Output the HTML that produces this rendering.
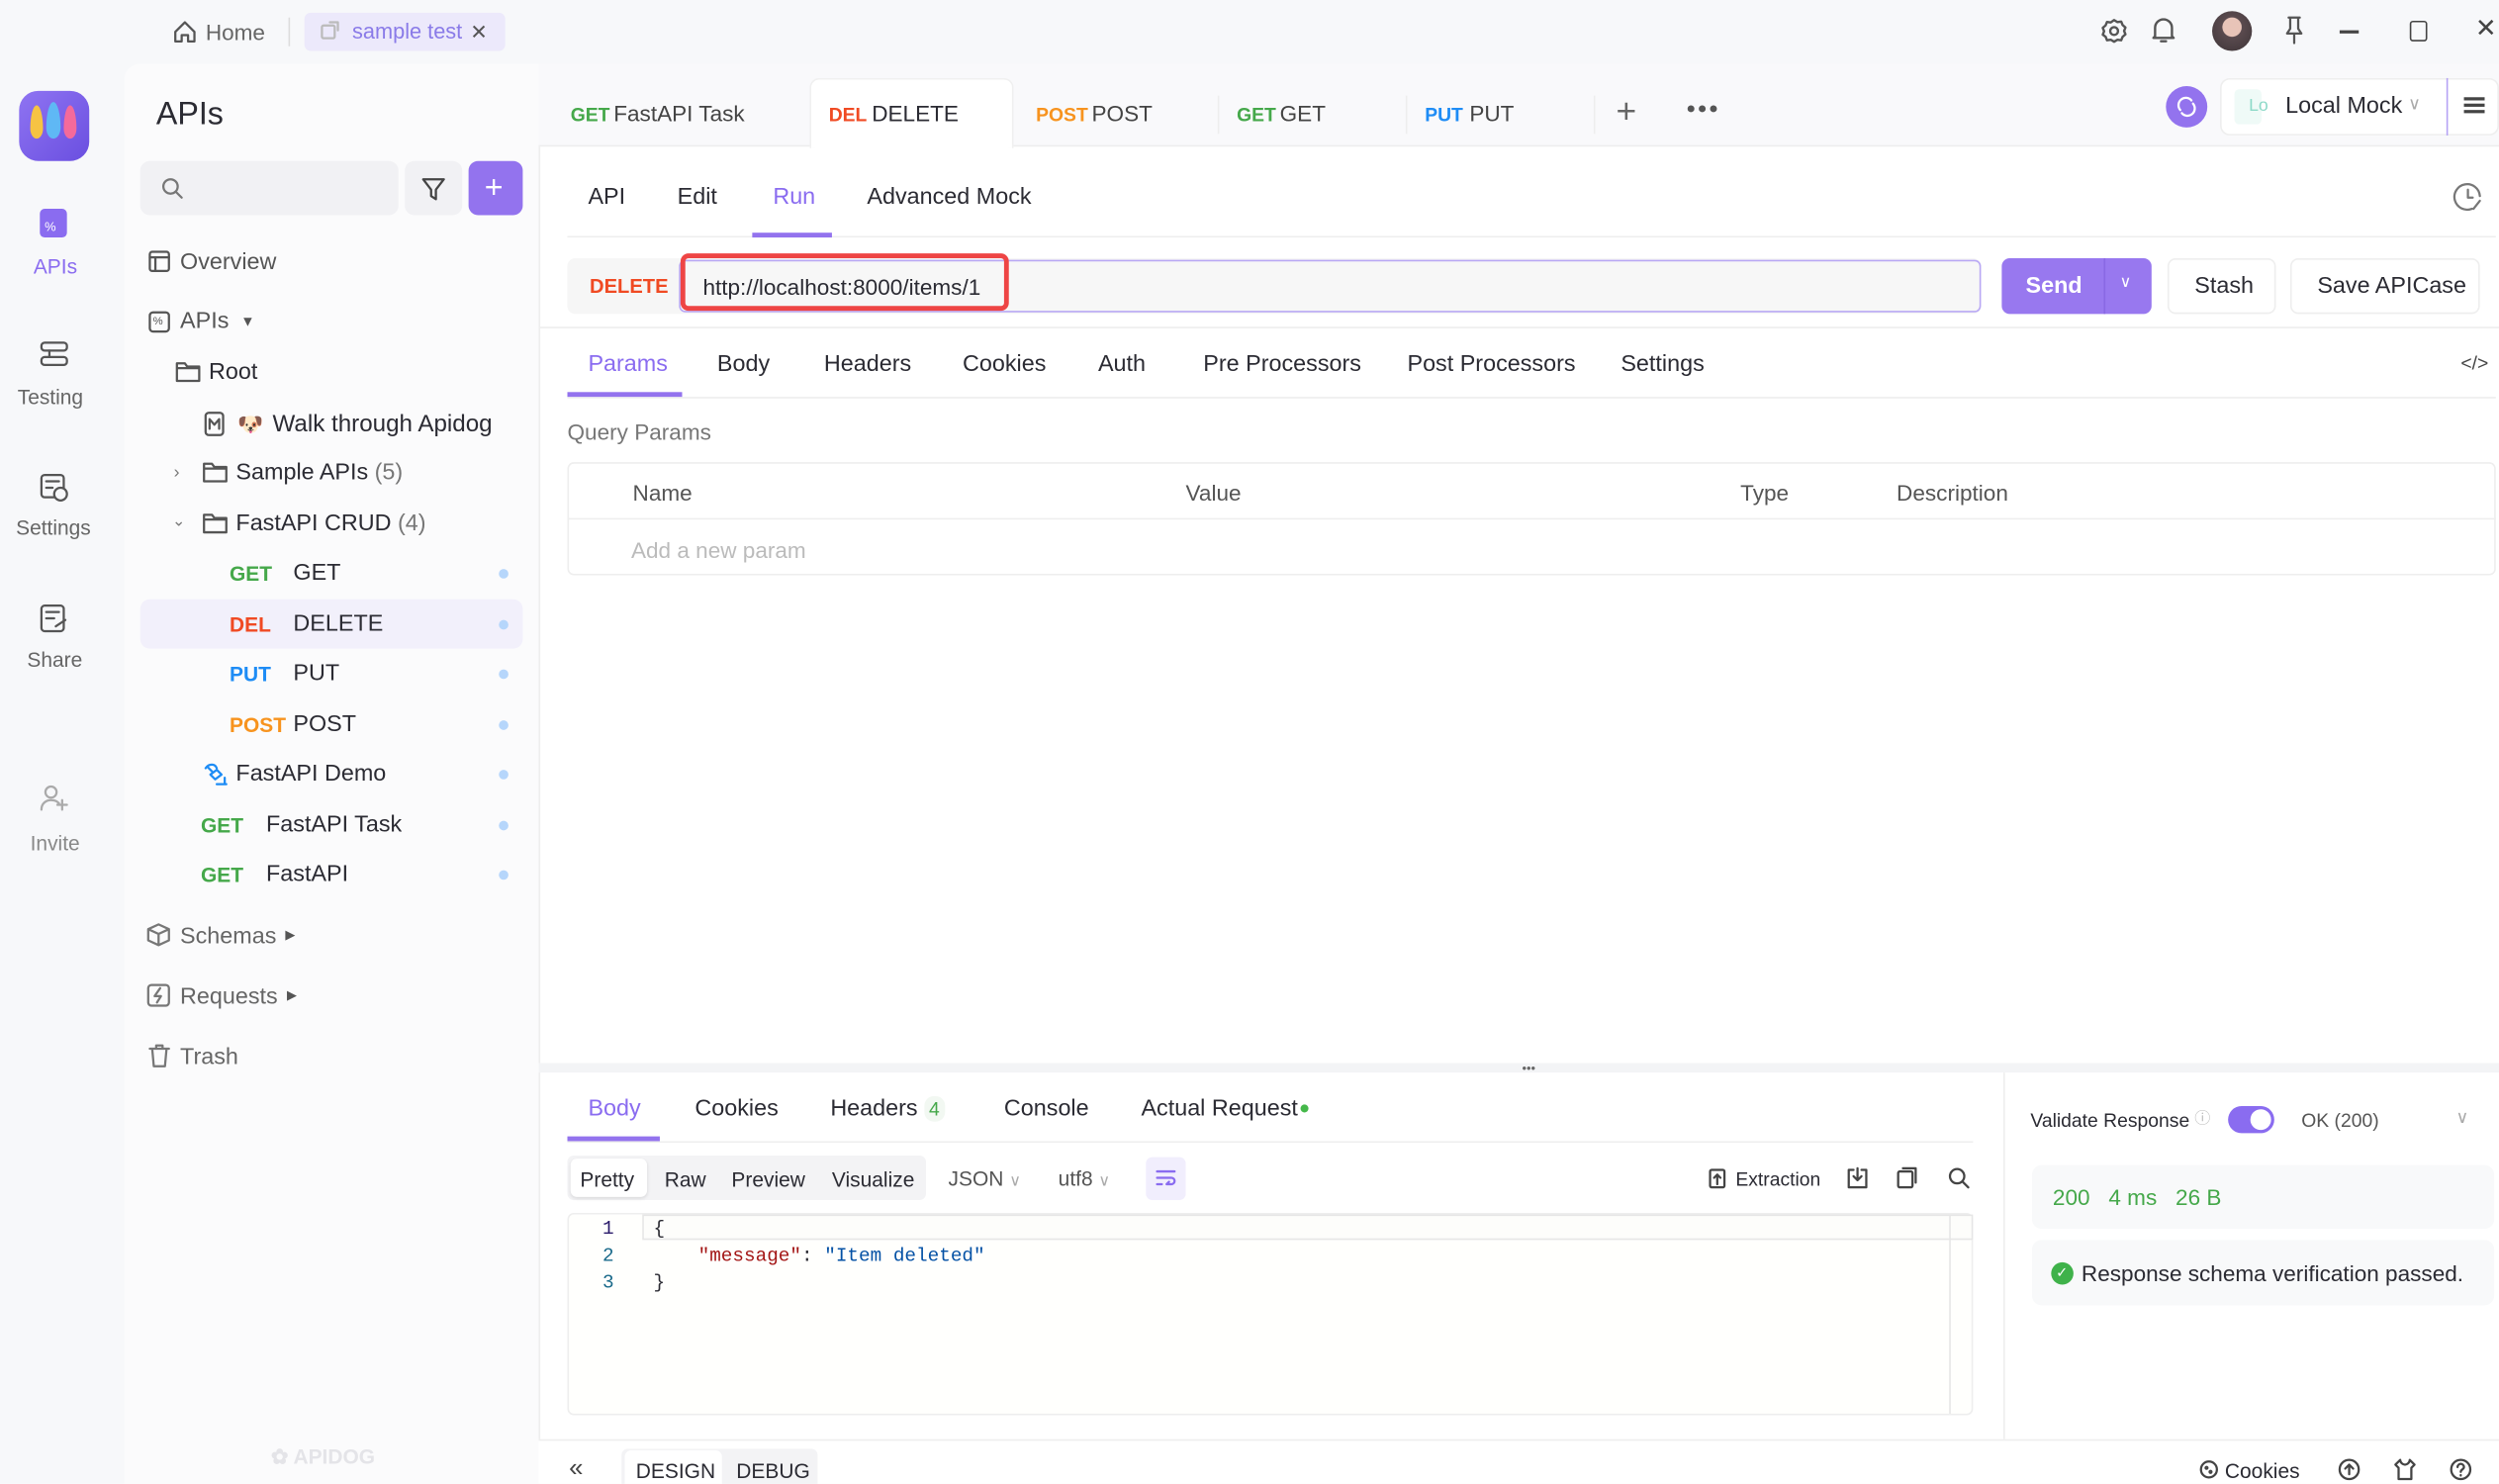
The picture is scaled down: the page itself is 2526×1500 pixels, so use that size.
<!DOCTYPE html>
<html><head><meta charset="utf-8"><style>
*{margin:0;padding:0;box-sizing:border-box}
html,body{width:2526px;height:1500px;overflow:hidden;background:#fff}
#r{position:absolute;left:0;top:0;width:1568px;height:931px;transform:scale(1.61097);transform-origin:0 0;font-family:"Liberation Sans",sans-serif;font-size:14px;color:#2b2b33;background:#f7f8fa}
.a{position:absolute}
.t{position:absolute;white-space:nowrap;line-height:1;transform:translateY(-50%)}
.b{font-weight:bold}
.g{color:#45a84a}.d{color:#f04a23}.p{color:#1e8cf5}.o{color:#f7931e}
.pu{color:#8a6cf0}
.gr{color:#666}
.dot{position:absolute;width:6px;height:6px;border-radius:50%;background:#b6d6fb;left:313px}
svg{position:absolute;fill:none;stroke:#555;stroke-width:1.4;stroke-linecap:round;stroke-linejoin:round}
</style></head><body><div id="r">
<!-- top bar -->
<svg style="left:108px;top:12px" width="16" height="16" viewBox="0 0 16 16"><path d="M2 8L8 2l6 6v6h-4v-4H6v4H2z"/></svg>
<span class="t gr" style="left:129px;top:20px">Home</span>
<div class="a" style="left:181px;top:11px;width:1px;height:18px;background:#ddd"></div>
<div class="a" style="left:191px;top:8px;width:126px;height:24px;background:#ece9fb;border-radius:4px"></div>
<svg style="left:201px;top:13px;stroke:#bbb" width="12" height="12" viewBox="0 0 12 12"><rect x="1" y="3" width="8" height="8" rx="1"/><path d="M6 1h5v5"/></svg>
<span class="t" style="left:221px;top:20px;color:#8a7be8;font-size:13.5px">sample test</span>
<span class="t" style="left:295px;top:20px;color:#555;font-size:13px">✕</span>
<svg style="left:1318px;top:11px" width="17" height="17" viewBox="0 0 16 16"><path d="M8 1.5l2 1.2 2.2-.3.8 2 1.7 1.5-.8 2 .8 2-1.7 1.5-.8 2-2.2-.3-2 1.2-2-1.2-2.2.3-.8-2L1.3 10.1l.8-2-.8-2 1.7-1.5.8-2 2.2.3z"/><circle cx="8" cy="8" r="2.3"/></svg>
<svg style="left:1349px;top:10px" width="17" height="18" viewBox="0 0 16 17"><path d="M3 12V7a5 5 0 0110 0v5l1 1H2zM6.5 15h3"/></svg>
<div class="a" style="left:1388px;top:7px;width:25px;height:25px;border-radius:50%;background:radial-gradient(circle at 50% 40%,#e8c4b8 0 30%,#5a4a4e 32%,#3d3538 100%)"></div>
<svg style="left:1432px;top:10px" width="15" height="18" viewBox="0 0 15 18"><path d="M4 1h7M5 1v7l-2 3h9l-2-3V1M7.5 11v6"/></svg>
<div class="a" style="left:1468px;top:19px;width:12px;height:1.5px;background:#444"></div>
<div class="a" style="left:1512px;top:13px;width:11px;height:13px;border:1.5px solid #444;border-radius:2px"></div>
<span class="t" style="left:1553px;top:19px;font-size:16px;color:#444">✕</span>

<!-- left rail -->
<div class="a" style="left:12px;top:57px;width:44px;height:44px;border-radius:12px;background:linear-gradient(135deg,#8f74f2,#6a4fe0)"></div>
<div class="a" style="left:19px;top:66px;width:8px;height:21px;border-radius:50%/70% 70% 30% 30%;background:#f6c343"></div>
<div class="a" style="left:29px;top:64px;width:9px;height:23px;border-radius:50%/70% 70% 30% 30%;background:#5fb8f5"></div>
<div class="a" style="left:40px;top:66px;width:8px;height:21px;border-radius:50%/70% 70% 30% 30%;background:#f46a9b"></div>
<div class="a" style="left:25px;top:131px;width:17px;height:18px;border-radius:3px;background:#8a6cf0"></div>
<span class="t" style="left:28px;top:143px;color:#fff;font-size:8px" >%</span>
<span class="t pu" style="left:21px;top:167px;font-size:13px">APIs</span>
<svg style="left:24px;top:213px" width="20" height="20" viewBox="0 0 20 20"><rect x="2" y="2" width="16" height="5" rx="2"/><rect x="2" y="11" width="16" height="5" rx="2"/><path d="M7 7v4"/></svg>
<span class="t gr" style="left:11px;top:249px;font-size:13px">Testing</span>
<svg style="left:24px;top:296px" width="20" height="20" viewBox="0 0 20 20"><rect x="2" y="2" width="14" height="14" rx="2"/><circle cx="14" cy="14" r="4" fill="#f7f8fa"/><path d="M5 6h8M5 10h4"/></svg>
<span class="t gr" style="left:10px;top:331px;font-size:13px">Settings</span>
<svg style="left:24px;top:378px" width="20" height="20" viewBox="0 0 20 20"><rect x="2" y="2" width="14" height="16" rx="2"/><path d="M5 6h8M5 10h5M11 15l6-4"/></svg>
<span class="t gr" style="left:17px;top:414px;font-size:13px">Share</span>
<svg style="left:25px;top:492px;stroke:#aaa" width="18" height="18" viewBox="0 0 18 18"><circle cx="7" cy="5" r="3.5"/><path d="M1 16c0-4 3-6 6-6s4 1 5 2M14 10v6M11 13h6"/></svg>
<span class="t" style="left:19px;top:529px;font-size:13px;color:#888">Invite</span>

<!-- sidebar -->
<div class="a" style="left:78px;top:40px;width:260px;height:891px;background:#fbfbfc;border-radius:10px 0 0 0"></div>
<span class="t" style="left:98px;top:72px;font-size:20px">APIs</span>
<div class="a" style="left:88px;top:101px;width:162px;height:34px;background:#f1f1f4;border-radius:6px"></div>
<svg style="left:101px;top:111px;stroke:#777" width="14" height="14" viewBox="0 0 14 14"><circle cx="6" cy="6" r="4.5"/><path d="M9.5 9.5L13 13"/></svg>
<div class="a" style="left:254px;top:101px;width:36px;height:34px;background:#f1f1f4;border-radius:6px"></div>
<svg style="left:264px;top:111px;stroke:#444" width="16" height="16" viewBox="0 0 16 16"><path d="M1.5 1.5h13L9.5 8v6l-3-2V8z"/></svg>
<div class="a" style="left:294px;top:101px;width:34px;height:34px;background:#9373ee;border-radius:6px"></div>
<span class="t" style="left:304px;top:118px;color:#fff;font-size:20px">+</span>

<svg style="left:93px;top:157px" width="14" height="14" viewBox="0 0 14 14"><rect x="1" y="1" width="12" height="12" rx="1.5"/><path d="M1 4.5h12M4.5 4.5V13"/></svg>
<span class="t" style="left:113px;top:165px;font-size:14.5px;color:#555">Overview</span>
<svg style="left:93px;top:195px" width="14" height="14" viewBox="0 0 14 14"><rect x="1" y="1" width="12" height="12" rx="2"/></svg>
<span class="t" style="left:96px;top:202px;font-size:7px;color:#555">%</span>
<span class="t" style="left:113px;top:202px;font-size:14.5px;color:#555">APIs</span>
<span class="t" style="left:151px;top:202px;font-size:9px;color:#555">▼</span>
<svg style="left:110px;top:226px" width="16" height="14" viewBox="0 0 16 14"><path d="M1 2h5l1.5 2H15v9H1z M1 5h14"/></svg>
<span class="t" style="left:131px;top:234px;font-size:14.5px">Root</span>
<svg style="left:128px;top:258px" width="13" height="16" viewBox="0 0 13 16"><rect x="1" y="1" width="11" height="14" rx="2"/><path d="M3.5 11V5l3 3.5 3-3.5v6"/></svg>
<span class="t" style="left:149px;top:266px;font-size:13px">🐶</span>
<span class="t" style="left:171px;top:266px;font-size:15px">Walk through Apidog</span>
<span class="t" style="left:109px;top:297px;color:#777;font-size:11px">›</span>
<svg style="left:127px;top:289px" width="16" height="14" viewBox="0 0 16 14"><path d="M1 2h5l1.5 2H15v9H1z M1 5h14"/></svg>
<span class="t" style="left:148px;top:297px;font-size:14.5px">Sample APIs <span style="color:#777">(5)</span></span>
<span class="t" style="left:108px;top:328px;color:#777;font-size:10px">⌄</span>
<svg style="left:127px;top:321px" width="16" height="14" viewBox="0 0 16 14"><path d="M1 2h5l1.5 2H15v9H1z M1 5h14"/></svg>
<span class="t" style="left:148px;top:329px;font-size:14.5px">FastAPI CRUD <span style="color:#777">(4)</span></span>

<span class="t b g" style="left:144px;top:360px;font-size:13px">GET</span><span class="t" style="left:184px;top:360px;font-size:14.5px">GET</span><div class="dot" style="top:357px"></div>
<div class="a" style="left:88px;top:376px;width:240px;height:31px;background:#f2f0fb;border-radius:6px"></div>
<span class="t b d" style="left:144px;top:392px;font-size:13px">DEL</span><span class="t" style="left:184px;top:392px;font-size:14.5px">DELETE</span><div class="dot" style="top:389px"></div>
<span class="t b p" style="left:144px;top:423px;font-size:13px">PUT</span><span class="t" style="left:184px;top:423px;font-size:14.5px">PUT</span><div class="dot" style="top:420px"></div>
<span class="t b o" style="left:144px;top:455px;font-size:13px">POST</span><span class="t" style="left:184px;top:455px;font-size:14.5px">POST</span><div class="dot" style="top:452px"></div>
<svg style="left:127px;top:478px;stroke:#1e8cf5" width="16" height="16" viewBox="0 0 16 16"><path d="M2 4c2-3 6-3 7 0M3 3l3 3M5 8l4-3 3 3-4 3zM9 14h6M14 10v4"/></svg>
<span class="t" style="left:148px;top:486px;font-size:14.5px">FastAPI Demo</span><div class="dot" style="top:483px"></div>
<span class="t b g" style="left:126px;top:518px;font-size:13px">GET</span><span class="t" style="left:167px;top:518px;font-size:14.5px">FastAPI Task</span><div class="dot" style="top:515px"></div>
<span class="t b g" style="left:126px;top:549px;font-size:13px">GET</span><span class="t" style="left:167px;top:549px;font-size:14.5px">FastAPI</span><div class="dot" style="top:546px"></div>

<svg style="left:92px;top:579px;stroke:#777" width="15" height="15" viewBox="0 0 15 15"><path d="M7.5 1L14 4v7l-6.5 3L1 11V4zM1 4l6.5 3L14 4M7.5 7v7"/></svg>
<span class="t" style="left:113px;top:588px;color:#666;font-size:14.5px">Schemas</span><span class="t" style="left:179px;top:587px;font-size:8px;color:#555">▶</span>
<svg style="left:92px;top:617px;stroke:#777" width="15" height="15" viewBox="0 0 15 15"><rect x="1" y="1" width="13" height="13" rx="2"/><path d="M8.5 3L5 8h4l-2.5 4"/></svg>
<span class="t" style="left:113px;top:626px;color:#666;font-size:14.5px">Requests</span><span class="t" style="left:180px;top:625px;font-size:8px;color:#555">▶</span>
<svg style="left:93px;top:655px;stroke:#777" width="14" height="15" viewBox="0 0 14 15"><path d="M1 3h12M5 3V1h4v2M2.5 3l1 11h7l1-11"/></svg>
<span class="t" style="left:113px;top:664px;color:#666;font-size:14.5px">Trash</span>
<span class="t" style="left:170px;top:914px;color:#e4e4e8;font-size:13px;font-weight:bold">✿ APIDOG</span>

<!-- main -->
<div class="a" style="left:338px;top:40px;width:1230px;height:891px;background:#fff;border-left:1px solid #eee"></div>
<div class="a" style="left:338px;top:40px;width:1230px;height:52px;background:#f9f9fb;border-bottom:1px solid #eee"></div>
<div class="a" style="left:508px;top:49px;width:128px;height:44px;background:#fff;border-radius:6px 6px 0 0;border:1px solid #f0f0f0;border-bottom:none"></div>
<span class="t b g" style="left:358px;top:72px;font-size:12px">GET</span><span class="t" style="left:385px;top:71px;color:#444">FastAPI Task</span>
<span class="t b d" style="left:520px;top:72px;font-size:12px">DEL</span><span class="t" style="left:547px;top:71px">DELETE</span>
<span class="t b o" style="left:650px;top:72px;font-size:12px">POST</span><span class="t" style="left:685px;top:71px;color:#444">POST</span>
<div class="a" style="left:764px;top:60px;width:1px;height:24px;background:#eee"></div>
<span class="t b g" style="left:776px;top:72px;font-size:12px">GET</span><span class="t" style="left:803px;top:71px;color:#444">GET</span>
<div class="a" style="left:882px;top:60px;width:1px;height:24px;background:#eee"></div>
<span class="t b p" style="left:894px;top:72px;font-size:12px">PUT</span><span class="t" style="left:922px;top:71px;color:#444">PUT</span>
<div class="a" style="left:1000px;top:60px;width:1px;height:24px;background:#eee"></div>
<span class="t" style="left:1014px;top:70px;font-size:22px;color:#666;font-weight:300">+</span>
<span class="t" style="left:1058px;top:69px;font-size:10px;color:#555;letter-spacing:1px">●●●</span>
<div class="a" style="left:1359px;top:54px;width:26px;height:26px;border-radius:50%;background:#9373ee"></div>
<svg style="left:1365px;top:60px;stroke:#fff" width="14" height="14" viewBox="0 0 14 14"><path d="M3 9a4.5 4.5 0 017-6M11 5a4.5 4.5 0 01-7 6"/></svg>
<div class="a" style="left:1393px;top:49px;width:175px;height:36px;border:1px solid #eee;border-radius:6px;background:#fff"></div>
<div class="a" style="left:1402px;top:56px;width:17px;height:22px;background:#effaf7;border-radius:3px"></div>
<span class="t" style="left:1411px;top:67px;color:#8dd9c8;font-size:11px">Lo</span>
<span class="t" style="left:1434px;top:67px;font-size:14.5px">Local Mock</span>
<span class="t" style="left:1511px;top:66px;color:#aaa;font-size:11px">∨</span>
<div class="a" style="left:1535px;top:49px;width:1px;height:36px;background:#b5a3f4"></div>
<div class="a" style="left:1546px;top:61px;width:13px;height:2px;background:#444;box-shadow:0 4px 0 #444,0 8px 0 #444"></div>

<span class="t" style="left:369px;top:124px;font-size:14.5px">API</span>
<span class="t" style="left:425px;top:124px;font-size:14.5px">Edit</span>
<span class="t pu" style="left:485px;top:124px;font-size:14.5px">Run</span>
<span class="t" style="left:544px;top:124px;font-size:14.5px">Advanced Mock</span>
<div class="a" style="left:356px;top:148px;width:1210px;height:1px;background:#eee"></div>
<div class="a" style="left:472px;top:146px;width:50px;height:3px;background:#9373ee"></div>
<svg style="left:1539px;top:114px;stroke:#777" width="19" height="19" viewBox="0 0 19 19"><path d="M12 17A8 8 0 1117 9"/><path d="M9.5 5v5h3M17 12l-4 5"/></svg>

<div class="a" style="left:356px;top:162px;width:887px;height:35px;background:#f6f6f6;border-radius:5px"></div>
<span class="t b d" style="left:370px;top:180px;font-size:12.5px">DELETE</span>
<div class="a" style="left:426px;top:163px;width:817px;height:33px;border:1px solid #b9a8f4;border-radius:4px;background:#f7f7f7"></div>
<div class="a" style="left:427px;top:159px;width:206px;height:36px;border:3px solid #ee4545;border-radius:5px"></div>
<span class="t" style="left:441px;top:180px;font-size:14px">http://localhost:8000/items/1</span>
<div class="a" style="left:1256px;top:162px;width:94px;height:35px;background:#9878ef;border-radius:5px"></div>
<div class="a" style="left:1320px;top:162px;width:1px;height:35px;background:#8a68e4"></div>
<span class="t b" style="left:1271px;top:180px;color:#fff;font-size:14.5px">Send</span>
<span class="t" style="left:1330px;top:178px;color:#fff;font-size:10px">∨</span>
<div class="a" style="left:1360px;top:162px;width:68px;height:35px;border:1px solid #eee;border-radius:5px"></div>
<span class="t" style="left:1377px;top:180px;font-size:14.5px">Stash</span>
<div class="a" style="left:1437px;top:162px;width:119px;height:35px;border:1px solid #eee;border-radius:5px"></div>
<span class="t" style="left:1454px;top:180px;font-size:14.5px">Save APICase</span>
<div class="a" style="left:338px;top:205px;width:1230px;height:1px;background:#eee"></div>

<span class="t pu" style="left:369px;top:229px;font-size:14.5px">Params</span>
<span class="t" style="left:450px;top:229px;font-size:14.5px">Body</span>
<span class="t" style="left:517px;top:229px;font-size:14.5px">Headers</span>
<span class="t" style="left:604px;top:229px;font-size:14.5px">Cookies</span>
<span class="t" style="left:689px;top:229px;font-size:14.5px">Auth</span>
<span class="t" style="left:755px;top:229px;font-size:14.5px">Pre Processors</span>
<span class="t" style="left:883px;top:229px;font-size:14.5px">Post Processors</span>
<span class="t" style="left:1017px;top:229px;font-size:14.5px">Settings</span>
<span class="t" style="left:1544px;top:228px;font-size:12px;color:#444">&lt;/&gt;</span>
<div class="a" style="left:356px;top:249px;width:1210px;height:1px;background:#eee"></div>
<div class="a" style="left:356px;top:246px;width:72px;height:3px;background:#9373ee"></div>
<span class="t" style="left:356px;top:271px;color:#777">Query Params</span>
<div class="a" style="left:356px;top:290px;width:1210px;height:71px;border:1px solid #eee;border-radius:4px"></div>
<div class="a" style="left:356px;top:325px;width:1210px;height:1px;background:#eee"></div>
<span class="t" style="left:397px;top:309px;color:#555">Name</span>
<span class="t" style="left:744px;top:309px;color:#555">Value</span>
<span class="t" style="left:1092px;top:309px;color:#555">Type</span>
<span class="t" style="left:1190px;top:309px;color:#555">Description</span>
<span class="t" style="left:396px;top:345px;color:#bbb">Add a new param</span>

<!-- response -->
<div class="a" style="left:338px;top:667px;width:1230px;height:6px;background:#f3f4f6"></div>
<span class="t" style="left:955px;top:671px;font-size:8px;color:#666">•••</span>
<div class="a" style="left:1257px;top:673px;width:1px;height:230px;background:#eee"></div>
<span class="t pu" style="left:369px;top:696px;font-size:14.5px">Body</span>
<span class="t" style="left:436px;top:696px;font-size:14.5px">Cookies</span>
<span class="t" style="left:521px;top:696px;font-size:14.5px">Headers <span style="color:#45a84a;font-size:12px;background:#f2f8f2;padding:1px 3px;border-radius:6px">4</span></span>
<span class="t" style="left:630px;top:696px;font-size:14.5px">Console</span>
<span class="t" style="left:716px;top:696px;font-size:14.5px">Actual Request</span>
<div class="a" style="left:816px;top:693px;width:5px;height:5px;border-radius:50%;background:#45b84a"></div>
<div class="a" style="left:356px;top:716px;width:882px;height:1px;background:#eee"></div>
<div class="a" style="left:356px;top:713px;width:58px;height:3px;background:#9373ee"></div>

<div class="a" style="left:356px;top:725px;width:225px;height:28px;background:#f3f3f5;border-radius:4px"></div>
<div class="a" style="left:358px;top:727px;width:48px;height:24px;background:#fff;border-radius:4px;box-shadow:0 1px 2px rgba(0,0,0,.1)"></div>
<span class="t" style="left:364px;top:740px;font-size:13px">Pretty</span>
<span class="t" style="left:417px;top:740px;font-size:13px">Raw</span>
<span class="t" style="left:459px;top:740px;font-size:13px">Preview</span>
<span class="t" style="left:522px;top:740px;font-size:13px">Visualize</span>
<span class="t" style="left:595px;top:740px;font-size:13px;color:#555">JSON <span style="color:#aaa;font-size:10px">∨</span></span>
<span class="t" style="left:664px;top:740px;font-size:13px;color:#555">utf8 <span style="color:#aaa;font-size:10px">∨</span></span>
<div class="a" style="left:719px;top:726px;width:25px;height:27px;background:#f1eefd;border-radius:4px"></div>
<svg style="left:725px;top:733px;stroke:#8a6cf0" width="13" height="13" viewBox="0 0 13 13"><path d="M1 2h11M1 6h9a2 2 0 010 4H7l1.5-1.5M1 10h3"/></svg>
<svg style="left:1072px;top:733px;stroke:#444" width="11" height="13" viewBox="0 0 11 13"><rect x="1" y="1" width="9" height="11" rx="1"/><path d="M5.5 10V4M3.5 6l2-2 2 2"/></svg>
<span class="t" style="left:1089px;top:740px;font-size:12px">Extraction</span>
<svg style="left:1159px;top:732px;stroke:#444" width="13" height="14" viewBox="0 0 13 14"><path d="M4 2H1v11h11V2H9M6.5 1v7M4 6l2.5 2.5L9 6"/></svg>
<svg style="left:1190px;top:732px;stroke:#444" width="13" height="14" viewBox="0 0 13 14"><rect x="1" y="3" width="9" height="10" rx="1"/><path d="M4 1h8v9"/></svg>
<svg style="left:1222px;top:732px;stroke:#444" width="14" height="14" viewBox="0 0 14 14"><circle cx="6" cy="6" r="4.5"/><path d="M9.5 9.5L13 13"/></svg>

<div class="a" style="left:356px;top:761px;width:882px;height:127px;border:1px solid #eee;border-radius:4px;background:#fffffd"></div>
<div class="a" style="left:403px;top:762px;width:835px;height:16px;border:1px solid #e6e6e6;background:#fdfdfb"></div>
<div class="a" style="left:1223px;top:762px;width:1px;height:125px;background:#e6e6e6"></div>
<div style="font-family:'Liberation Mono',monospace;font-size:12px">
<span class="t" style="left:378px;top:771px;color:#2a1a6a">1</span><span class="t" style="left:410px;top:771px">{</span>
<span class="t" style="left:378px;top:788px;color:#1a6a8a">2</span><span class="t" style="left:438px;top:788px"><span style="color:#a31515">"message"</span>: <span style="color:#0451a5">"Item deleted"</span></span>
<span class="t" style="left:378px;top:805px;color:#1a6a8a">3</span><span class="t" style="left:410px;top:805px">}</span>
</div>

<span class="t" style="left:1274px;top:703px;font-size:12px">Validate Response</span>
<span class="t" style="left:1377px;top:703px;font-size:10px;color:#bbb">ⓘ</span>
<div class="a" style="left:1398px;top:694px;width:29px;height:17px;border-radius:9px;background:#8a6cf0"></div>
<div class="a" style="left:1412px;top:696px;width:13px;height:13px;border-radius:50%;background:#fff"></div>
<span class="t" style="left:1444px;top:703px;font-size:12px;color:#555">OK (200)</span>
<span class="t" style="left:1541px;top:702px;font-size:11px;color:#aaa">∨</span>
<div class="a" style="left:1275px;top:731px;width:290px;height:40px;background:#f8f9fa;border-radius:6px"></div>
<span class="t" style="left:1288px;top:751px;color:#45a84a;font-size:14px">200&nbsp;&nbsp;&nbsp;4 ms&nbsp;&nbsp;&nbsp;26 B</span>
<div class="a" style="left:1275px;top:778px;width:290px;height:41px;background:#f8f9fa;border-radius:6px"></div>
<div class="a" style="left:1287px;top:792px;width:14px;height:14px;border-radius:50%;background:#3fb24a"></div>
<span class="t" style="left:1290px;top:799px;color:#fff;font-size:9px">✓</span>
<span class="t" style="left:1306px;top:799px;font-size:14px">Response schema verification passed.</span>

<!-- footer -->
<div class="a" style="left:338px;top:903px;width:1230px;height:28px;background:#fff;border-top:1px solid #eee"></div>
<span class="t" style="left:357px;top:922px;font-size:16px;color:#444">«</span>
<div class="a" style="left:390px;top:909px;width:123px;height:22px;background:#f3f3f5;border-radius:4px 4px 0 0"></div>
<div class="a" style="left:392px;top:910px;width:61px;height:21px;background:#fff;border-radius:4px 4px 0 0"></div>
<span class="t" style="left:399px;top:923px;font-size:13px">DESIGN</span>
<span class="t" style="left:462px;top:923px;font-size:13px">DEBUG</span>
<svg style="left:1380px;top:916px;stroke:#444" width="12" height="12" viewBox="0 0 12 12"><circle cx="6" cy="6" r="5"/><circle cx="4.5" cy="5" r=".6"/><circle cx="7" cy="7.5" r=".6"/></svg>
<span class="t" style="left:1396px;top:923px;font-size:13px">Cookies</span>
<svg style="left:1467px;top:915px;stroke:#444" width="14" height="14" viewBox="0 0 14 14"><circle cx="7" cy="7" r="6"/><path d="M7 10V4M4.5 6.5L7 4l2.5 2.5"/></svg>
<svg style="left:1502px;top:915px;stroke:#444" width="14" height="14" viewBox="0 0 14 14"><path d="M4 1L1 4l2 2v7h8V6l2-2-3-3c0 2-2 3-3 3S4 3 4 1z"/></svg>
<svg style="left:1537px;top:915px;stroke:#444" width="14" height="14" viewBox="0 0 14 14"><circle cx="7" cy="7" r="6"/><path d="M5 5.5a2 2 0 114 0c0 1.5-2 1.5-2 3M7 10.5v.3"/></svg>
</div></body></html>
